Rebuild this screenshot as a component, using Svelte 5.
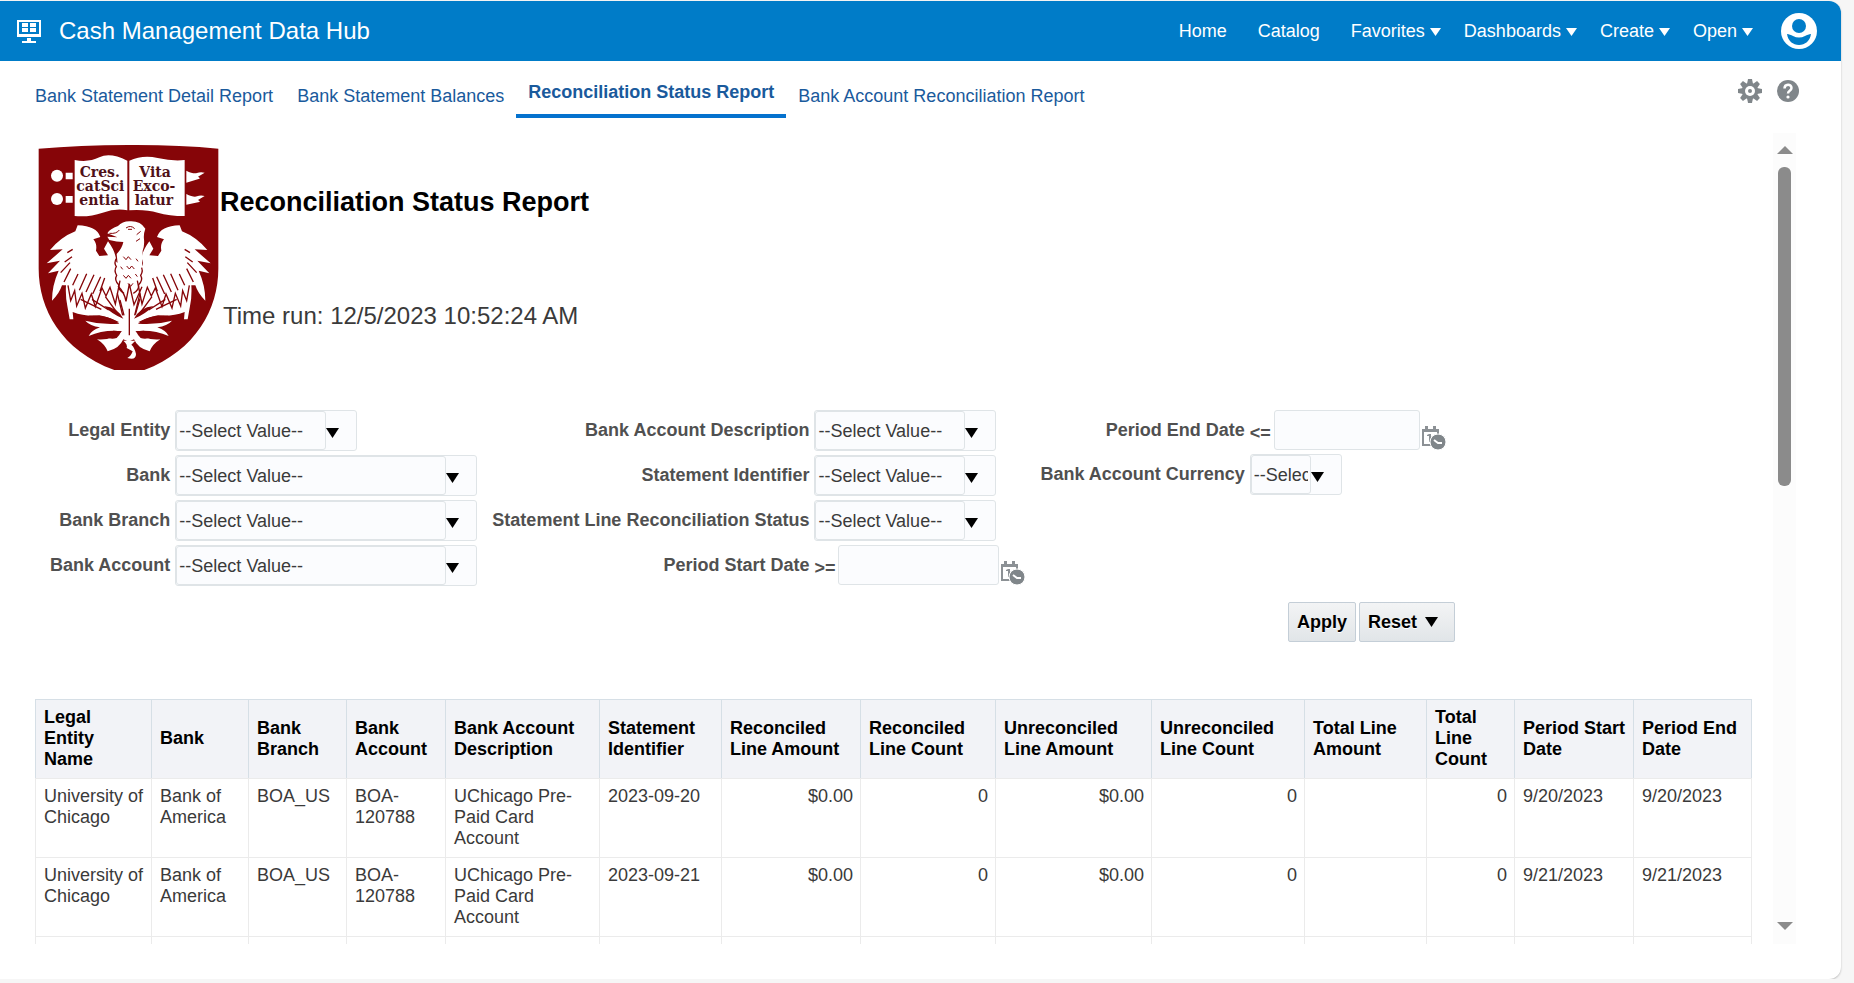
<script lang="ts">
  interface Filter {
    id: string
    label: string
    kind: 'small' | 'large' | 'tiny' | 'date'
    operator?: string
  }

  const menus = ['Favorites', 'Dashboards', 'Create', 'Open']

  const tabs = [
    'Bank Statement Detail Report',
    'Bank Statement Balances',
    'Reconciliation Status Report',
    'Bank Account Reconciliation Report',
  ]

  let active_tab = $state(tabs[2])

  const filter_groups: Filter[][] = [
    [
      { id: 'legal_entity', label: 'Legal Entity', kind: 'small' },
      { id: 'bank', label: 'Bank', kind: 'large' },
      { id: 'bank_branch', label: 'Bank Branch', kind: 'large' },
      { id: 'bank_account', label: 'Bank Account', kind: 'large' },
    ],
    [
      { id: 'description', label: 'Bank Account Description', kind: 'small' },
      { id: 'identifier', label: 'Statement Identifier', kind: 'small' },
      { id: 'line_status', label: 'Statement Line Reconciliation Status', kind: 'small' },
      { id: 'period_start', label: 'Period Start Date', kind: 'date', operator: '>=' },
    ],
    [
      { id: 'period_end', label: 'Period End Date', kind: 'date', operator: '<=' },
      { id: 'currency', label: 'Bank Account Currency', kind: 'tiny' },
    ],
  ]

  const columns = [
    { title: 'Legal Entity Name', width: 116 },
    { title: 'Bank', width: 97 },
    { title: 'Bank Branch', width: 98 },
    { title: 'Bank Account', width: 99 },
    { title: 'Bank Account Description', width: 154 },
    { title: 'Statement Identifier', width: 122 },
    { title: 'Reconciled Line Amount', width: 139, numeric: true },
    { title: 'Reconciled Line Count', width: 135, numeric: true },
    { title: 'Unreconciled Line Amount', width: 156, numeric: true },
    { title: 'Unreconciled Line Count', width: 153, numeric: true },
    { title: 'Total Line Amount', width: 122, numeric: true },
    { title: 'Total Line Count', width: 88, numeric: true },
    { title: 'Period Start Date', width: 119 },
    { title: 'Period End Date', width: 118 },
  ]

  // the second half of the crest mirrors the first
  const crest_sides = ['', 'translate(556 0) scale(-1 1)']

  function statement(identifier: string, date: string) {
    return [
      'University of Chicago',
      'Bank of America',
      'BOA_US',
      'BOA-120788',
      'UChicago Pre-Paid Card Account',
      identifier,
      '$0.00',
      '0',
      '$0.00',
      '0',
      '',
      '0',
      date,
      date,
    ]
  }

  const rows = [
    statement('2023-09-20', '9/20/2023'),
    statement('2023-09-21', '9/21/2023'),
    columns.map(() => ''),
  ]
</script>

{#snippet arrow(size: number)}
  <svg class="arrow" width={size} height={size - 3} viewBox="0 0 12 9" preserveAspectRatio="none" aria-hidden="true">
    <path d="M0 0h12L6 9z" fill="currentColor" />
  </svg>
{/snippet}

<div class="shell">
  <header class="brand_bar">
    <svg class="brand_icon" width="24" height="23" viewBox="0 0 24 23" aria-hidden="true">
      <path d="M0 0h24v17H0z M2 2v12h20V2z" fill="#fff" fill-rule="evenodd" />
      <path d="M5 3h6v4H5z M13 3h6v4h-6z M5 8h6v4H5z M13 8h6v4h-6z M10 18h4v3h5v2H5v-2h5z" fill="#fff" />
    </svg>
    <span class="brand_title">Cash Management Data Hub</span>

    <nav class="global_nav">
      <a class="nav_link" href="#home">Home</a>
      <a class="nav_link" href="#catalog">Catalog</a>
      {#each menus as menu}
        <button class="nav_menu" type="button">{menu}{@render arrow(11)}</button>
      {/each}
    </nav>

    <button class="avatar" type="button" aria-label="Account">
      <svg width="36" height="36" viewBox="0 0 36 36">
        <circle cx="18" cy="18" r="18" fill="#fff" />
        <circle cx="18" cy="13" r="7" fill="#007cc8" />
        <path d="M6 21c2 0 4 1 6 2 4 2 8 2 12 0 2-1 4-2 6-2-1 7-6 11-12 11S7 28 6 21z" fill="#007cc8" />
      </svg>
    </button>
  </header>

  <div class="tab_bar">
    {#each tabs as tab}
      <button
        class="tab"
        class:active={tab === active_tab}
        type="button"
        onclick={() => {
          active_tab = tab
        }}
      >
        {tab}
      </button>
    {/each}

    <div class="page_tools">
      <button class="icon_button" type="button" aria-label="Page options">
        <svg width="24" height="24" viewBox="-12 -12 24 24">
          <g fill="#80868a">
            {#each [0, 45, 90, 135] as angle}
              <path d="M-2 -12h4l1 5v14l-1 5h-4l-1-5v-14z" transform="rotate({angle})" />
            {/each}
            <circle r="8" />
          </g>
          <circle r="5" fill="#fff" />
          <circle r="2" fill="#80868a" />
        </svg>
      </button>
      <button class="icon_button" type="button" aria-label="Help">
        <svg width="22" height="22" viewBox="0 0 22 22">
          <circle cx="11" cy="11" r="11" fill="#80868a" />
          <path d="M7.500 8.500c0-5 7-5 7-.5 0 3-3.500 2.500-3.500 5.500" fill="none" stroke="#fff" stroke-width="2.500" />
          <circle cx="11" cy="17" r="1.600" fill="#fff" />
        </svg>
      </button>
    </div>
  </div>

  <div class="body">
    <main class="report">
      <section class="report_head">
        <svg class="crest" width="182" height="226" viewBox="6 6 546 678" role="img" aria-label="University crest">
          <path d="M8 20Q130 10 278 9T547 20V380C547 500 480 625 325 684H235C75 625 8 500 8 380z" fill="#860508" />

          <!-- book -->
          <g fill="#fff">
            <circle cx="63" cy="101" r="18" />
            <circle cx="63" cy="171" r="18" />
            <path d="M89 92h21v20H89z M89 162h21v20H89z" />
            <path d="M451 86q22 11 32 7t23-1l-20 12q8 5 4 6l-39 12z M451 156q22 11 32 7t23-1l-20 12q8 5 4 6l-39 8z" />
            <path d="M116 54Q158 62 190 46T274 56V205Q240 198 200 212T116 222z" />
            <path d="M280 56Q320 38 365 48T446 54V222Q400 222 365 212T280 205z" />
          </g>
          <g class="crest_text" fill="#4f1118">
            <text x="131" y="104">Cres.</text>
            <text x="121" y="146">catSci</text>
            <text x="130" y="188">entia</text>
            <text x="310" y="104">Vita</text>
            <text x="290" y="146">Exco-</text>
            <text x="296" y="188">latur</text>
          </g>

          <!-- wings and laurel -->
          {#each crest_sides as side}
            <g transform={side}>
              <path
                d="M125 250Q182 252 193 285L172 292Q184 305 180 326L190 342 216 340 204 320 216 298Q240 330 241 360L280 380V600L262 592Q250 620 215 628 206 606 183 592 230 596 258 568 205 562 158 582 165 566 192 556 162 552 148 536 200 550 250 545 225 525 190 520 150 525 110 510L112 532 101 532 94 492Q88 465 90 430L78 430Q70 455 48 476 48 430 68 386L36 394 72 356 32 364 80 322 42 324Q75 285 118 268z"
                fill="#fff"
              />
              <path
                d="M232 566q-12 4-22 18 14 10 32 4 10-10 14-20z M250 541q-40-24-92-20 48 20 92 20z M262 530q-18-34-58-38 26 26 58 38z"
                fill="#860508"
              />
              <g fill="none" stroke="#860508" stroke-width="4">
                <path d="M96 430l8 46 12-30 6 46 16-38 10 44 18-42 12 38 20-56 12 24 12-26 16 50 14-70" />
                <path d="M110 430l16-34M130 445l22-50M150 450l24-52M170 456l24-52M192 448l14-40M74 392l28-30M84 420l20-40M94 332l16-10M86 360l22-16" />
                <path d="M260 520l-16-66M246 516l-38-52M218 504l-50-32M196 502l-62-30" />
                <path d="M241 350q-8 12 0 24-8 12 1 26-8 14 6 28-2 16 16 26" />
              </g>
            </g>
          {/each}

          <!-- eagle head, breast and stem -->
          <path
            d="M246 252q14-16 40-14 28 0 42 22-6 16-4 32 2 18-4 34l-2 50-36 30-36-30-4-40q16-16 20-36-20 0-42-6l-6-10 30 2-30-12q8-14 32-22z"
            fill="#fff"
          />
          <path d="M262 596q14 12 10 22l18 10q-4 14-16 20 26 8 26-12-4-20-14-28l12-12z" fill="#fff" />
          <g fill="none" stroke="#860508" stroke-width="3">
            <path d="M250 264q-8 12-30 10M270 258q14-10 26 2M276 262h12M314 268l-12 10M312 290l-12 8" />
            <path d="M262 344l8 9 7-9 8 9M272 372l8 9 7-9 8 9M262 400l8 9 7-9 8 9M276 424l8 9 7-9M254 374l6 8M300 350l6 8M298 396l6 8" />
            <path d="M246 432q20 20 24 46l10-52 14 62 24-54M280 580V500M264 520l-12-46M298 518l14-48" stroke-width="4" />
          </g>
        </svg>

        <div class="report_titles">
          <h1 class="report_title">Reconciliation Status Report</h1>
          <p class="time_run">Time run: 12/5/2023 10:52:24 AM</p>
        </div>
      </section>

      <form class="filters" onsubmit={(event) => event.preventDefault()}>
        {#each filter_groups as group}
          <div class="filter_group">
            {#each group as filter}
              <label class="filter_label" for={filter.id}>{filter.label}</label>
              {#if filter.kind === 'date'}
                <div class="date_field {filter.id}">
                  <span class="operator">{filter.operator}</span>
                  <input class="date_input" id={filter.id} type="text" />
                  <button class="icon_button calendar" type="button" aria-label="Select date">
                    <svg width="24" height="24" viewBox="0 0 24 24">
                      <path d="M1 4h15v15H1z" fill="#fff" stroke="#8c9195" stroke-width="2" />
                      <path d="M0 3h17v3H0z M3 0h3v4H3z M11 0h3v4h-3z M5 9l2-1h2v8H7v-6H5z" fill="#8c9195" />
                      <circle cx="16" cy="16" r="8" fill="#80868a" stroke="#fff" />
                      <path d="M12 14l4 3h4" fill="none" stroke="#fff" stroke-width="2" />
                    </svg>
                  </button>
                </div>
              {:else}
                <div class="combo {filter.kind}">
                  <select class="combo_select" id={filter.id}>
                    <option>--Select Value--</option>
                  </select>
                  <span class="combo_arrow">{@render arrow(13)}</span>
                </div>
              {/if}
            {/each}
          </div>
        {/each}

        <div class="actions">
          <button class="action" type="submit">Apply</button>
          <button class="action reset" type="button">Reset{@render arrow(13)}</button>
        </div>
      </form>

      <table class="results">
        <colgroup>
          {#each columns as column}
            <col style:width="{column.width}px" />
          {/each}
        </colgroup>
        <thead>
          <tr>
            {#each columns as column}
              <th scope="col">{column.title}</th>
            {/each}
          </tr>
        </thead>
        <tbody>
          {#each rows as row}
            <tr>
              {#each row as cell, index}
                <td class:numeric={columns[index].numeric}>{cell}</td>
              {/each}
            </tr>
          {/each}
        </tbody>
      </table>
    </main>

    <div class="scrollbar" aria-hidden="true">
      <svg width="16" height="8" viewBox="0 0 16 8"><path d="M0 8h16L8 0z" fill="#8b8b8b" /></svg>
      <div class="scroll_track"><div class="scroll_thumb"></div></div>
      <svg width="16" height="8" viewBox="0 0 16 8"><path d="M0 0h16L8 8z" fill="#8b8b8b" /></svg>
    </div>
  </div>
</div>

<style>
  :global(body) {
    background: #f6f6f6;
    font-family: 'Liberation Sans', Arial, sans-serif;
    font-size: 18px;
    line-height: 21px;
    color: #3a3a3a;
  }

  button,
  input,
  select {
    font: inherit;
    color: inherit;
  }

  .shell {
    display: flex;
    flex-direction: column;
    box-sizing: border-box;
    height: calc(100vh - 5px);
    margin: 1px 13px 0 0;
    overflow: hidden;
    background: #fff;
    border-radius: 0 12px 12px 0;
    box-shadow: 0 1px 2px #bbb;
  }

  .brand_bar {
    display: flex;
    flex: none;
    align-items: center;
    height: 60px;
    padding: 0 24px 0 17px;
    color: #fff;
    background: #007cc8;
  }

  .brand_title {
    margin-left: 18px;
    font-size: 24px;
    line-height: 28px;
  }

  .global_nav {
    display: flex;
    gap: 23px;
    margin-left: auto;
  }

  .nav_link {
    padding-right: 8px;
    color: inherit;
    text-decoration: none;
  }

  .nav_menu {
    display: flex;
    gap: 5px;
    align-items: center;
    padding: 0;
    background: none;
    border: 0;
  }

  .nav_menu .arrow {
    padding-top: 2px;
  }

  .avatar {
    display: flex;
    margin-left: 28px;
    padding: 0;
    background: none;
    border: 0;
  }

  .tab_bar {
    display: flex;
    flex: none;
    padding: 0 42px 0 23px;
  }

  .tab {
    padding: 25px 12px 11px;
    color: #1a5a9c;
    background: none;
    border: 0;
  }

  .tab.active {
    padding-top: 21px;
    font-weight: bold;
    border-bottom: 4px solid #0572ce;
  }

  .page_tools {
    display: flex;
    gap: 15px;
    align-items: center;
    margin-left: auto;
    padding-top: 2px;
  }

  .icon_button {
    display: flex;
    padding: 0;
    background: none;
    border: 0;
  }

  .body {
    display: flex;
    flex: 1;
    gap: 21px;
    min-height: 0;
    padding: 15px 45px 35px 35px;
  }

  .report {
    flex: 1;
    min-width: 0;
    overflow: hidden;
  }

  .report_head {
    display: flex;
    padding: 11px 0 0 3px;
  }

  .crest {
    flex: none;
  }

  .crest_text {
    font-family: 'DejaVu Serif', serif;
    font-size: 42px;
    font-weight: bold;
  }

  .report_titles {
    padding-top: 43px;
  }

  .report_title {
    margin: 0;
    font-size: 27px;
    line-height: 30px;
    color: #000;
  }

  .time_run {
    margin: 85px 0 0 3px;
    font-size: 24px;
    line-height: 28px;
  }

  .filters {
    display: flex;
    flex-wrap: wrap;
    column-gap: 15px;
    align-items: start;
    padding: 40px 0 0 15px;
  }

  .filter_group {
    display: grid;
    grid-template-columns: auto auto;
    gap: 4px 5px;
    justify-items: start;
  }

  .filter_label {
    justify-self: end;
    padding-top: 10px;
    font-weight: bold;
    color: #505050;
  }

  .combo {
    display: flex;
    box-sizing: border-box;
    width: 182px;
    height: 41px;
    background: #fbfcfe;
    border: 1px solid #dfe4e7;
    border-radius: 3px;
  }

  .combo.large {
    width: 302px;
  }

  .combo.tiny {
    width: 92px;
  }

  .combo_select {
    flex: 1;
    min-width: 0;
    padding: 2px 2px 0;
    background: none;
    border: 1px solid #dfe4e7;
    border-radius: 3px;
    appearance: none;
  }

  .combo_arrow {
    display: flex;
    align-items: center;
    width: 30px;
    padding-top: 5px;
    color: #000;
  }

  .date_field {
    display: flex;
    align-items: end;
  }

  .operator {
    width: 24px;
    padding: 0 0 6px;
    font-weight: bold;
    color: #505050;
  }

  .date_input {
    box-sizing: border-box;
    width: 161px;
    height: 40px;
    background: #fbfcfe;
    border: 1px solid #dfe4e7;
    border-radius: 3px;
  }

  .period_end .date_input {
    width: 146px;
  }

  .calendar {
    margin-left: 2px;
  }

  .actions {
    display: flex;
    flex-basis: 100%;
    gap: 3px;
    padding: 16px 0 0 1238px;
  }

  .action {
    box-sizing: border-box;
    height: 40px;
    padding: 0 8px;
    font-weight: bold;
    color: #000;
    text-shadow: 0 1px 0 #fff;
    background: linear-gradient(#f3f4f5, #e1e5e8);
    border: 1px solid #c4ced7;
    border-radius: 2px;
  }

  .reset {
    display: flex;
    gap: 8px;
    align-items: center;
    padding-right: 16px;
  }

  .results {
    width: 100%;
    margin-top: 57px;
    table-layout: fixed;
    border-collapse: collapse;
    border-right: 1px solid #d6dfe6;
  }

  .results th {
    padding: 7px 7px 8px 8px;
    color: #000;
    text-align: left;
    background: #f2f3f7;
    border: 1px solid #d6dfe6;
    border-bottom-color: #ebebeb;
  }

  .results td {
    padding: 7px 7px 8px 8px;
    vertical-align: top;
    border: 1px solid #ebebeb;
  }

  .results .numeric {
    text-align: right;
  }

  .scrollbar {
    display: flex;
    flex: none;
    flex-direction: column;
    gap: 13px;
    align-items: center;
    width: 23px;
    box-sizing: border-box;
    padding: 13px 0 14px;
    background: #fcfcfc;
  }

  .scroll_track {
    flex: 1;
    width: 13px;
  }

  .scroll_thumb {
    height: 43%;
    background: #8b8b8b;
    border-radius: 6px;
  }
</style>
